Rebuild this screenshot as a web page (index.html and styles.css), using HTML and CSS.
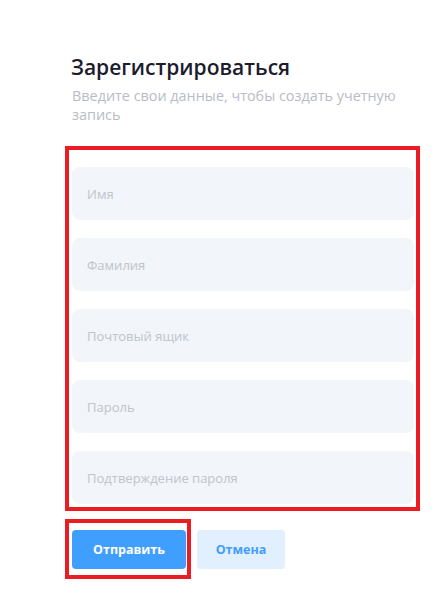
FILE: index.html
```html
<!DOCTYPE html>
<html lang="ru">
<head>
<meta charset="utf-8">
<title>Зарегистрироваться</title>
<link rel="stylesheet" href="styles.css">
</head>
<body>
<div class="page">
  <h1 class="title">Зарегистрироваться</h1>
  <p class="subtitle">Введите свои данные, чтобы создать учетную запись</p>
  <div class="fields">
    <input class="field" type="text" placeholder="Имя">
    <input class="field" type="text" placeholder="Фамилия">
    <input class="field" type="email" placeholder="Почтовый ящик">
    <input class="field" type="password" placeholder="Пароль">
    <input class="field" type="password" placeholder="Подтверждение пароля">
  </div>
  <div class="actions">
    <div class="submit-wrap">
      <button class="btn btn-primary" type="button">Отправить</button>
    </div>
    <button class="btn btn-light" type="button">Отмена</button>
  </div>
</div>
</body>
</html>
```

FILE: styles.css
```css
html, body {
  margin: 0;
  padding: 0;
  background: #ffffff;
}

.page {
  padding: 52px 0 0 65px;
  font-family: "Open Sans", "DejaVu Sans", sans-serif;
}

.title {
  margin: 0 0 0 6px;
  font-size: 21px;
  line-height: 30px;
  font-weight: 600;
  color: #1b1c2e;
}

.subtitle {
  margin: 4px 0 0 7px;
  width: 340px;
  font-size: 14.4px;
  line-height: 19px;
  color: #b9bcc6;
}

.fields {
  box-sizing: border-box;
  width: 355px;
  margin-top: 22px;
  border: 4px solid #ec1c24;
  padding: 17px 2px 3px 3px;
  display: flex;
  flex-direction: column;
  gap: 18px;
}

.field {
  box-sizing: border-box;
  height: 53px;
  width: 100%;
  border: none;
  outline: none;
  border-radius: 8px;
  background: #f2f5f9;
  padding: 0 15px;
  font-family: inherit;
  font-size: 13px;
  color: #333;
}

.field::placeholder {
  color: #c0c4cc;
}

.actions {
  margin-top: 8px;
  display: flex;
  align-items: flex-start;
  gap: 6px;
}

.submit-wrap {
  border: 4px solid #ec1c24;
  padding: 7px 1px 6px 3px;
}

.btn {
  height: 39px;
  border: none;
  border-radius: 4px;
  font-family: inherit;
  font-size: 12.5px;
  font-weight: 700;
  cursor: pointer;
  display: block;
}

.btn-primary {
  width: 114px;
  background: #409eff;
  color: #ffffff;
}

.btn-light {
  margin-top: 11px;
  width: 88px;
  background: #e1effe;
  color: #409eff;
}
```
